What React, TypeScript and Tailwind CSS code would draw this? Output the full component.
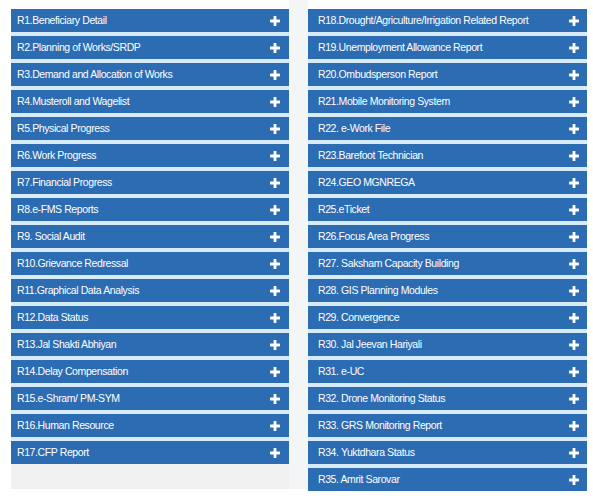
import React from 'react';

const left = [
  'R1.Beneficiary Detail',
  'R2.Planning of Works/SRDP',
  'R3.Demand and Allocation of Works',
  'R4.Musteroll and Wagelist',
  'R5.Physical Progress',
  'R6.Work Progress',
  'R7.Financial Progress',
  'R8.e-FMS Reports',
  'R9. Social Audit',
  'R10.Grievance Redressal',
  'R11.Graphical Data Analysis',
  'R12.Data Status',
  'R13.Jal Shakti Abhiyan',
  'R14.Delay Compensation',
  'R15.e-Shram/ PM-SYM',
  'R16.Human Resource',
  'R17.CFP Report',
];

const right = [
  'R18.Drought/Agriculture/Irrigation Related Report',
  'R19.Unemployment Allowance Report',
  'R20.Ombudsperson Report',
  'R21.Mobile Monitoring System',
  'R22. e-Work File',
  'R23.Barefoot Technician',
  'R24.GEO MGNREGA',
  'R25.eTicket',
  'R26.Focus Area Progress',
  'R27. Saksham Capacity Building',
  'R28. GIS Planning Modules',
  'R29. Convergence',
  'R30. Jal Jeevan Hariyali',
  'R31. e-UC',
  'R32. Drone Monitoring Status',
  'R33. GRS Monitoring Report',
  'R34. Yuktdhara Status',
  'R35. Amrit Sarovar',
];

function Plus() {
  return (
    <svg width="10" height="10" viewBox="0 0 10 10" className="shrink-0">
      <rect x="3.6" y="0" width="2.8" height="10" rx="0.6" fill="#fff" />
      <rect x="0" y="3.6" width="10" height="2.8" rx="0.6" fill="#fff" />
    </svg>
  );
}

function Bar({ label, pad }: { label: string; pad: string }) {
  return (
    <div className={`flex items-center justify-between h-[23px] bg-[#2c6cb2] ${pad} cursor-pointer`}>
      <span className="text-white text-[10.5px] tracking-[-0.4px] whitespace-nowrap">{label}</span>
      <Plus />
    </div>
  );
}

export default function App() {
  return (
    <div className="flex h-[496px] w-[593px] bg-white" style={{ fontFamily: '"Liberation Sans", Arial, sans-serif' }}>
      <div className="w-[11px] shrink-0" />
      {/* left column */}
      <div className="w-[278px] shrink-0 flex flex-col">
        <div className="h-[9px] bg-white" />
        <div className="flex flex-col gap-[4px] bg-[#d8ebf8]">
          {left.map((l) => (
            <Bar key={l} label={l} pad="pl-[6px] pr-[9px]" />
          ))}
        </div>
        <div className="h-[25px] bg-[#f0f0f1]" />
      </div>
      {/* gutter */}
      <div className="w-[19px] shrink-0 flex flex-col">
        <div className="h-[489px] bg-[#f4f5f7]" />
      </div>
      {/* right column */}
      <div className="w-[279px] shrink-0 flex flex-col">
        <div className="h-[9px] bg-white" />
        <div className="flex flex-col gap-[4px] bg-[#d8ebf8]">
          {right.map((l) => (
            <Bar key={l} label={l} pad="pl-[10px] pr-[8px]" />
          ))}
        </div>
      </div>
      <div className="flex-1 bg-white" />
    </div>
  );
}
